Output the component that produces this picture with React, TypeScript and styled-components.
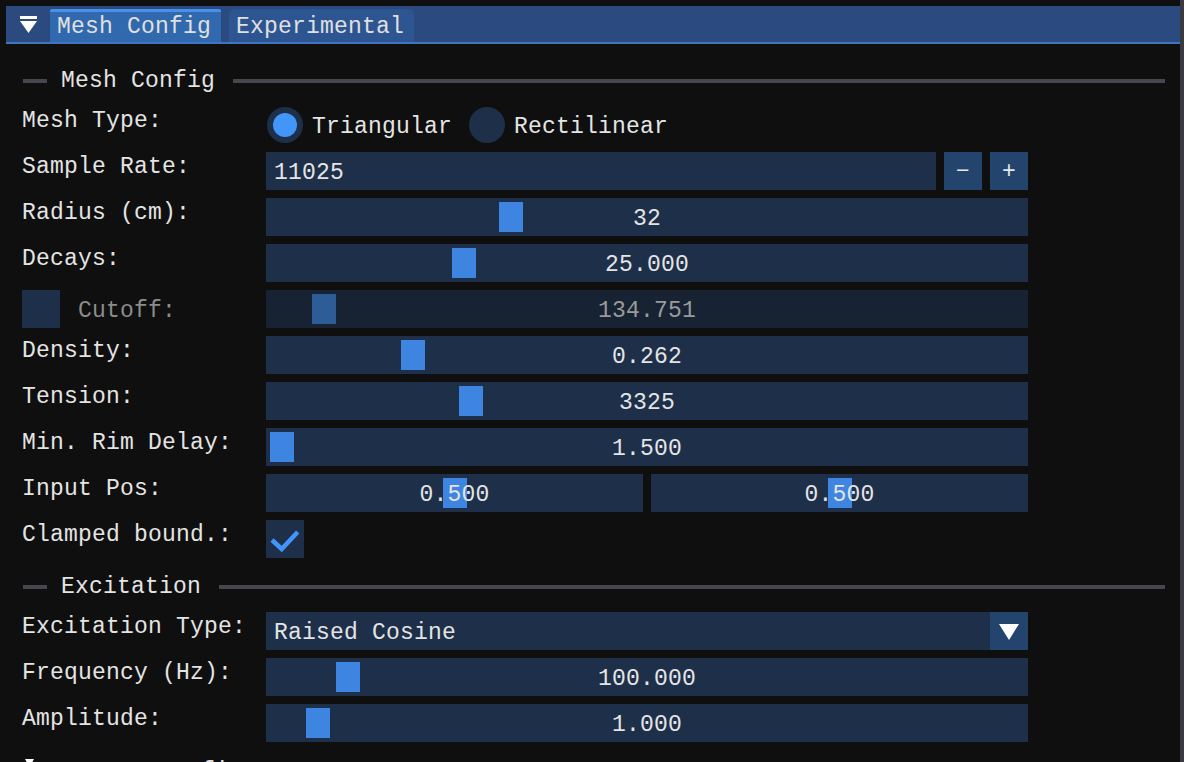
import React from "react";
import styled, { createGlobalStyle } from "styled-components";

const C = {
  bg: "#0f0f0f",
  frame: "#1d2f49",
  frameDisabled: "#172232",
  grab: "#3d85e0",
  grabDisabled: "#2d5c96",
  button: "#23456d",
  check: "#4296fa",
  text: "#e4e4e4",
  textDisabled: "#8c8c8c",
  valueDisabled: "#9a9a9a",
  sep: "#46464e",
};

const GlobalStyle = createGlobalStyle`
  html, body { margin: 0; padding: 0; background: ${C.bg}; overflow: hidden; }
  body {
    font-family: "Liberation Mono", "DejaVu Sans Mono", monospace;
    font-size: 23px;
    line-height: 26px;
    letter-spacing: 0.2px;
    color: ${C.text};
  }
`;

const Screen = styled.div`
  display: flex;
  width: 1184px;
  height: 762px;
  overflow: hidden;
  background: ${C.bg};
`;

const Window = styled.div`
  flex: 1;
  min-width: 0;
  display: flex;
  flex-direction: column;
  padding: 6px 0 0 6px;
`;

const ScrollEdge = styled.div`
  width: 4px;
  background: #3a3a41;
`;

const TabBar = styled.div`
  display: flex;
  align-items: flex-end;
  height: 36px;
  flex-shrink: 0;
  background: #2b4b80;
  border-bottom: 2px solid #3f75bf;
`;

const CollapseButton = styled.div`
  width: 44px;
  height: 36px;
  display: flex;
  align-items: center;
  justify-content: center;
`;

const Tab = styled.div<{ $active?: boolean }>`
  height: 33px;
  box-sizing: border-box;
  padding: 0 10px 0 7px;
  margin-right: 8px;
  display: flex;
  align-items: center;
  color: #e0e0e0;
  border-radius: ${(p) => (p.$active ? "2px 2px 0 0" : "6px 6px 0 0")};
  background: ${(p) => (p.$active ? "#3169ae" : "#2d5592")};
  border-top: 3px solid ${(p) => (p.$active ? "#4a90ea" : "#2d5592")};
`;

const Content = styled.div`
  flex: 1;
  display: flex;
  flex-direction: column;
  gap: 8px;
  padding: 16px 16px 0 16px;
`;

const SectionHeader = styled.div`
  display: flex;
  align-items: center;
  height: 38px;
  flex-shrink: 0;
  box-sizing: border-box;
  padding-top: 4px;
`;

const Dash = styled.span`
  width: 24px;
  height: 4px;
  margin: 0 14px 0 1px;
  background: ${C.sep};
`;

const SectionLine = styled.span`
  flex: 1;
  height: 4px;
  margin: 0 -1px 0 18px;
  background: ${C.sep};
`;

const Row = styled.div`
  display: flex;
  height: 38px;
  flex-shrink: 0;
`;

const Label = styled.div<{ $disabled?: boolean }>`
  width: 244px;
  flex-shrink: 0;
  padding-top: 2px;
  white-space: nowrap;
  color: ${(p) => (p.$disabled ? C.textDisabled : C.text)};
`;

const LabelGroup = styled.div`
  width: 244px;
  flex-shrink: 0;
  display: flex;
  align-items: center;
  gap: 18px;
`;

const InlineLabel = styled.span<{ $disabled?: boolean }>`
  padding-top: 4px;
  white-space: nowrap;
  color: ${(p) => (p.$disabled ? C.textDisabled : C.text)};
`;

const Control = styled.div<{ $tight?: boolean }>`
  width: 762px;
  display: flex;
  gap: ${(p) => (p.$tight ? "0" : "8px")};
`;

const Frame = styled.div<{ $disabled?: boolean; $left?: boolean }>`
  position: relative;
  flex: 1;
  height: 38px;
  box-sizing: border-box;
  padding: 4px ${(p) => (p.$left ? "0 0 8px" : "0 0 0")};
  display: flex;
  align-items: center;
  justify-content: ${(p) => (p.$left ? "flex-start" : "center")};
  background: ${(p) => (p.$disabled ? C.frameDisabled : C.frame)};
  color: ${(p) => (p.$disabled ? C.valueDisabled : C.text)};
  white-space: nowrap;
`;

const Grab = styled.div<{ $disabled?: boolean }>`
  position: absolute;
  top: 4px;
  bottom: 4px;
  width: 24px;
  background: ${(p) => (p.$disabled ? C.grabDisabled : C.grab)};
`;

const FrameText = styled.span`
  position: relative;
`;

const SquareButton = styled.div`
  width: 38px;
  height: 38px;
  flex-shrink: 0;
  box-sizing: border-box;
  padding-top: 2px;
  display: flex;
  align-items: center;
  justify-content: center;
  background: ${C.button};
  color: #e8e8e8;
`;

const RadioGroup = styled.div`
  display: flex;
  gap: 16px;
`;

const RadioOption = styled.div`
  display: flex;
  align-items: center;
  gap: 8px;
`;

const RadioCircle = styled.span<{ $on?: boolean }>`
  width: 36px;
  height: 36px;
  margin: 1px;
  border-radius: 50%;
  background: ${C.frame};
  display: flex;
  align-items: center;
  justify-content: center;
  &::after {
    content: "";
    display: ${(p) => (p.$on ? "block" : "none")};
    width: 24px;
    height: 24px;
    border-radius: 50%;
    background: ${C.check};
  }
`;

const RadioText = styled.span`
  padding-top: 4px;
`;

const CheckBox = styled.div`
  width: 38px;
  height: 38px;
  flex-shrink: 0;
  background: ${C.frame};
  display: flex;
`;

const TreeRow = styled.div`
  display: flex;
  align-items: flex-start;
  height: 38px;
  flex-shrink: 0;
  gap: 8px;
  padding-top: 7px;
`;

const TreeArrow = styled.span`
  width: 28px;
  display: flex;
  justify-content: flex-start;
  padding: 2px 0 0 3px;
`;

const TreeText = styled.span`
  padding-top: 2px;
`;

function Slider({
  value,
  frac,
  disabled,
}: {
  value: string;
  frac: number;
  disabled?: boolean;
}) {
  return (
    <Frame $disabled={disabled}>
      <Grab
        $disabled={disabled}
        style={{ left: `calc(4px + ${frac} * (100% - 32px))` }}
      />
      <FrameText>{value}</FrameText>
    </Frame>
  );
}

function Header({ title }: { title: string }) {
  return (
    <SectionHeader>
      <Dash />
      <span>{title}</span>
      <SectionLine />
    </SectionHeader>
  );
}

function SliderRow({
  label,
  value,
  frac,
}: {
  label: string;
  value: string;
  frac: number;
}) {
  return (
    <Row>
      <Label>{label}</Label>
      <Control>
        <Slider value={value} frac={frac} />
      </Control>
    </Row>
  );
}

const DownTriangle = ({ w, h }: { w: number; h: number }) => (
  <svg width={w} height={h} viewBox={`0 0 ${w} ${h}`}>
    <polygon points={`0,0 ${w},0 ${w / 2},${h}`} fill="#ffffff" />
  </svg>
);

export default function App() {
  return (
    <>
      <GlobalStyle />
      <Screen>
        <Window>
          <TabBar>
            <CollapseButton>
              <svg width="17" height="17" viewBox="0 0 17 17">
                <rect x="0" y="0" width="17" height="3" fill="#ffffff" />
                <polygon points="0,5 17,5 8.5,17" fill="#ffffff" />
              </svg>
            </CollapseButton>
            <Tab $active>Mesh Config</Tab>
            <Tab>Experimental</Tab>
          </TabBar>
          <Content>
            <Header title="Mesh Config" />
            <Row>
              <Label>Mesh Type:</Label>
              <RadioGroup>
                <RadioOption>
                  <RadioCircle $on />
                  <RadioText>Triangular</RadioText>
                </RadioOption>
                <RadioOption>
                  <RadioCircle />
                  <RadioText>Rectilinear</RadioText>
                </RadioOption>
              </RadioGroup>
            </Row>
            <Row>
              <Label>Sample Rate:</Label>
              <Control>
                <Frame $left>
                  <FrameText>11025</FrameText>
                </Frame>
                <SquareButton>−</SquareButton>
                <SquareButton>+</SquareButton>
              </Control>
            </Row>
            <SliderRow label="Radius (cm):" value="32" frac={0.3137} />
            <SliderRow label="Decays:" value="25.000" frac={0.249} />
            <Row>
              <LabelGroup>
                <CheckBox />
                <InlineLabel $disabled>Cutoff:</InlineLabel>
              </LabelGroup>
              <Control>
                <Slider value="134.751" frac={0.0575} disabled />
              </Control>
            </Row>
            <SliderRow label="Density:" value="0.262" frac={0.179} />
            <SliderRow label="Tension:" value="3325" frac={0.259} />
            <SliderRow label="Min. Rim Delay:" value="1.500" frac={0} />
            <Row>
              <Label>Input Pos:</Label>
              <Control>
                <Slider value="0.500" frac={0.5} />
                <Slider value="0.500" frac={0.5} />
              </Control>
            </Row>
            <Row>
              <Label>Clamped bound.:</Label>
              <CheckBox>
                <svg width="38" height="38" viewBox="0 0 38 38">
                  <polyline
                    points="6,20 15.7,29 31.7,12"
                    fill="none"
                    stroke={C.check}
                    strokeWidth="4.5"
                  />
                </svg>
              </CheckBox>
            </Row>
            <Header title="Excitation" />
            <Row>
              <Label>Excitation Type:</Label>
              <Control $tight>
                <Frame $left>
                  <FrameText>Raised Cosine</FrameText>
                </Frame>
                <SquareButton>
                  <DownTriangle w={20} h={16} />
                </SquareButton>
              </Control>
            </Row>
            <SliderRow label="Frequency (Hz):" value="100.000" frac={0.0904} />
            <SliderRow label="Amplitude:" value="1.000" frac={0.049} />
            <TreeRow>
              <TreeArrow>
                <DownTriangle w={9} h={8} />
              </TreeArrow>
              <TreeText>Output Config</TreeText>
            </TreeRow>
          </Content>
        </Window>
        <ScrollEdge />
      </Screen>
    </>
  );
}
